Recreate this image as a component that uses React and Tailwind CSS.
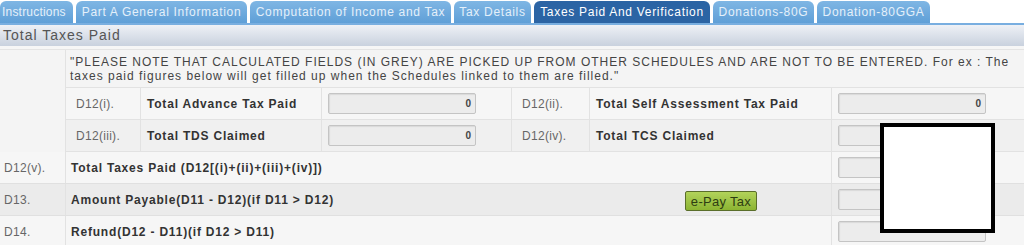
import { Fragment } from 'react';

const TABS = [
  { label: 'Instructions', w: 'w-[73px]', pad: 'pl-[2px] tracking-[0.2px]' },
  { label: 'Part A General Information', w: 'w-[171px]' },
  { label: 'Computation of Income and Tax', w: 'w-[201px]' },
  { label: 'Tax Details', w: 'w-[77px]' },
  { label: 'Taxes Paid And Verification', w: 'w-[176px]', active: true },
  { label: 'Donations-80G', w: 'w-[101px]' },
  { label: 'Donation-80GGA', w: 'w-[113px]' },
];

function Field({ value }) {
  return (
    <div className="h-[21px] w-[148px] rounded-[2px] border border-[#c4c4c4] bg-[#ececec] px-1 text-right text-[10px] font-bold leading-[19px] text-[#444] shadow-[inset_1px_1px_1px_rgba(0,0,0,0.08)]">
      {value}
    </div>
  );
}

function SubRow({ left, right, bg }) {
  return (
    <div className={`flex h-[32px] items-stretch border-b border-[#e2e2e2] ${bg}`}>
      {[left, right].map((c, i) => (
        <Fragment key={i}>
          <div className={`flex items-center border-r border-[#e2e2e2] pl-[10px] text-[12px] tracking-[0.3px] text-[#666] ${i === 0 ? 'w-[75px]' : 'w-[78px]'}`}>
            {c.code}
          </div>
          <div className={`flex items-center whitespace-nowrap border-r border-[#e2e2e2] pl-[6px] text-[12px] font-bold tracking-[0.8px] text-[#333] ${i === 0 ? 'w-[181px]' : 'w-[242px]'}`}>
            {c.label}
          </div>
          <div className={`flex items-center border-r border-[#e2e2e2] pl-[6px] ${i === 0 ? 'w-[190px]' : 'flex-1 border-r-0'}`}>
            <Field value={c.value} />
          </div>
        </Fragment>
      ))}
    </div>
  );
}

function FullRow({ code, label, bg, children }) {
  return (
    <div className={`flex h-[32px] items-stretch border-b border-[#e0e0e0] ${bg}`}>
      <div className="flex w-[66px] items-center border-r border-[#e2e2e2] pl-[4px] text-[12px] tracking-[0.3px] text-[#666]">
        {code}
      </div>
      <div className="relative flex w-[766px] items-center border-r border-[#e2e2e2] pl-[5px] text-[12px] font-bold tracking-[0.8px] text-[#333]">
        {label}
        {children}
      </div>
      <div className="flex flex-1 items-center pl-[6px]">
        <Field value="" />
      </div>
    </div>
  );
}

export default function App() {
  return (
    <div className="relative h-[245px] w-[1024px] overflow-hidden bg-white font-['Liberation_Sans',Arial,sans-serif]">
      <div className="flex h-[23px] items-end gap-[3px] bg-white">
        {TABS.map((t) => (
          <div
            key={t.label}
            className={`flex h-[22px] shrink-0 items-center whitespace-nowrap rounded-t-[6px] text-[12px] ${t.w} ${t.pad || 'justify-center tracking-[0.7px]'} ${
              t.active
                ? 'bg-[#2b64a4] text-white'
                : 'bg-gradient-to-b from-[#7fb6e4] to-[#5f9fd7] text-[#e4f0fa]'
            }`}
          >
            {t.label}
          </div>
        ))}
      </div>
      <div className="h-[2px] bg-[#78aee0]" />
      <div className="flex h-[21px] items-center bg-gradient-to-b from-[#eef1f6] to-[#c9d1de] pl-[3px] text-[14px] tracking-[1px] text-[#555]">
        Total Taxes Paid
      </div>
      <div className="h-[4px] border-b border-[#e4e4e4] bg-[#f6f6f6]" />

      <div className="flex bg-[#f4f4f4]">
        <div className="w-[66px] border-r border-[#e2e2e2]" />
        <div className="flex-1">
          <div className="h-[38px] whitespace-nowrap border-b border-[#e2e2e2] pl-[4px] pt-[5px] text-[12px] leading-[14px] tracking-[1px] text-[#444]">
            "PLEASE NOTE THAT CALCULATED FIELDS (IN GREY) ARE PICKED UP FROM OTHER SCHEDULES AND ARE NOT TO BE ENTERED. For ex : The
            <br />
            taxes paid figures below will get filled up when the Schedules linked to them are filled."
          </div>
          <SubRow
            bg="bg-[#f6f6f6]"
            left={{ code: 'D12(i).', label: 'Total Advance Tax Paid', value: '0' }}
            right={{ code: 'D12(ii).', label: 'Total Self Assessment Tax Paid', value: '0' }}
          />
          <SubRow
            bg="bg-[#f0f0f0]"
            left={{ code: 'D12(iii).', label: 'Total TDS Claimed', value: '0' }}
            right={{ code: 'D12(iv).', label: 'Total TCS Claimed', value: '' }}
          />
        </div>
      </div>

      <FullRow code="D12(v)." label="Total Taxes Paid (D12[(i)+(ii)+(iii)+(iv)])" bg="bg-[#f6f6f6]" />
      <FullRow code="D13." label="Amount Payable(D11 - D12)(if D11 > D12)" bg="bg-[#ebebeb]">
        <button className="absolute left-[619px] top-[7px] h-[20px] w-[72px] rounded-[2px] border border-[#5a6e2a] bg-gradient-to-b from-[#b2d35a] to-[#8cb432] text-[13px] font-normal tracking-[0.3px] text-[#2e3d12]">
          e-Pay Tax
        </button>
      </FullRow>
      <FullRow code="D14." label="Refund(D12 - D11)(if D12 > D11)" bg="bg-[#f6f6f6]" />

      <div className="absolute left-[880px] top-[123px] h-[110px] w-[115px] border-[4px] border-black bg-white" />
    </div>
  );
}
